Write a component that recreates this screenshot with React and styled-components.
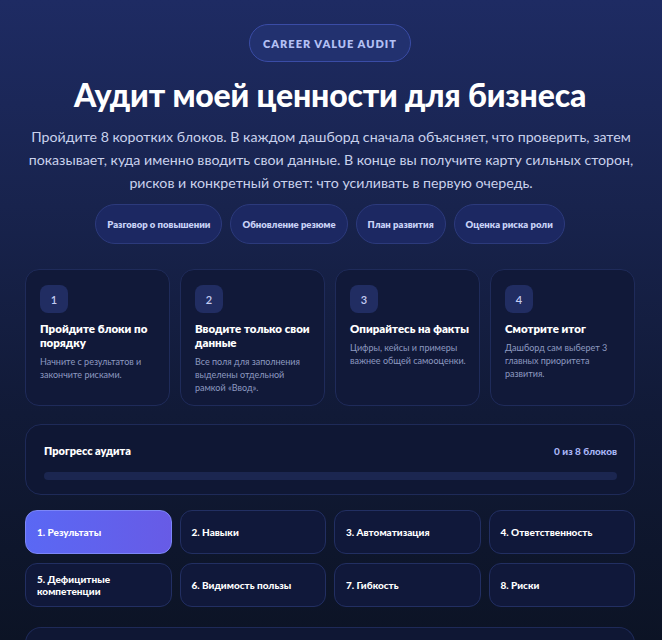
import styled, { createGlobalStyle } from "styled-components";

const GlobalStyle = createGlobalStyle`
  html, body {
    margin: 0;
    padding: 0;
  }
  body {
    font-family: Lato, "Noto Sans", sans-serif;
    background: linear-gradient(180deg, #1e2b63 0%, #18234d 30%, #111a37 60%, #0b1221 100%);
    min-height: 100vh;
    color: #fff;
  }
`;

const Page = styled.div`
  padding: 24px 27px 0 25px;
  display: flex;
  flex-direction: column;
`;

const Hero = styled.header`
  display: flex;
  flex-direction: column;
  align-items: center;
  text-align: center;
`;

const Badge = styled.div`
  display: flex;
  align-items: center;
  height: 36px;
  padding: 0 13px;
  border-radius: 999px;
  background: #22316f;
  border: 1px solid #3a4ca6;
  color: #b3c0f4;
  font-size: 11px;
  font-weight: 800;
  letter-spacing: 1px;
`;

const Title = styled.h1`
  margin: 15px 0 0;
  font-size: 32px;
  line-height: 36px;
  font-weight: 900;
  color: #fff;
  letter-spacing: -0.2px;
`;

const Lead = styled.p`
  margin: 12px -2px 0 0;
  font-size: 14.2px;
  line-height: 23px;
  color: #c9d1ec;
`;

const Chips = styled.div`
  display: flex;
  gap: 8px;
  margin-top: 10px;
`;

const Chip = styled.div`
  display: flex;
  align-items: center;
  height: 38px;
  padding: 0 11px;
  border-radius: 999px;
  background: #1c2862;
  border: 1px solid #2c3a7c;
  color: #c8d2f6;
  font-size: 9.5px;
  font-weight: 800;
`;

const Steps = styled.div`
  display: grid;
  grid-template-columns: repeat(4, 1fr);
  gap: 10px;
  margin-top: 25px;
`;

const StepCard = styled.div`
  height: 137px;
  box-sizing: border-box;
  padding: 15px 8px 15px 14px;
  border-radius: 14px;
  background: #111939;
  border: 1px solid #1f2b5a;
`;

const StepNum = styled.div`
  width: 28px;
  height: 28px;
  border-radius: 8px;
  background: #212d62;
  color: #c4ccf2;
  font-size: 11px;
  font-weight: 600;
  display: flex;
  align-items: center;
  justify-content: center;
`;

const StepTitle = styled.div`
  margin-top: 9px;
  font-size: 11.5px;
  line-height: 14px;
  font-weight: 800;
  color: #fff;
`;

const StepText = styled.div`
  margin-top: 5px;
  padding-right: 5px;
  font-size: 9px;
  line-height: 13px;
  color: #8e9ac0;
`;

const ProgressCard = styled.section`
  margin-top: 18px;
  padding: 19px 17px 14px 18px;
  border-radius: 16px;
  background: #0f1734;
  border: 1px solid #1e2a58;
`;

const ProgressHead = styled.div`
  display: flex;
  justify-content: space-between;
  align-items: center;
`;

const ProgressLabel = styled.div`
  font-size: 11px;
  font-weight: 800;
  color: #fff;
`;

const ProgressCount = styled.div`
  font-size: 10px;
  font-weight: 900;
  color: #a8b5f6;
`;

const Track = styled.div`
  margin-top: 15px;
  height: 8px;
  border-radius: 4px;
  background: #1b2650;
  overflow: hidden;
`;

const Fill = styled.div`
  height: 100%;
  background: linear-gradient(90deg, #5865f2, #7a5cf0);
`;

const Tabs = styled.div`
  display: grid;
  grid-template-columns: repeat(4, 1fr);
  gap: 9px 8px;
  margin-top: 15px;
`;

const Tab = styled.button`
  height: 44px;
  display: flex;
  align-items: center;
  text-align: left;
  padding: 0 11px;
  border-radius: 12px;
  font-family: inherit;
  font-size: 10px;
  line-height: 12px;
  font-weight: 900;
  color: #fff;
  cursor: pointer;
  background: ${(p) =>
    p.$active ? "linear-gradient(90deg, #5a68f4 0%, #675be6 100%)" : "#10183a"};
  border: 1px solid ${(p) => (p.$active ? "#7c86f7" : "#222f62")};
`;

const NextCard = styled.div`
  margin-top: 20px;
  height: 60px;
  border-radius: 16px 16px 0 0;
  background: #0f1734;
  border: 1px solid #1e2a58;
  border-bottom: none;
`;

const chips = [
  "Разговор о повышении",
  "Обновление резюме",
  "План развития",
  "Оценка риска роли",
];

const steps = [
  {
    title: "Пройдите блоки по порядку",
    text: "Начните с результатов и закончите рисками.",
  },
  {
    title: "Вводите только свои данные",
    text: "Все поля для заполнения выделены отдельной рамкой «Ввод».",
  },
  {
    title: "Опирайтесь на факты",
    text: "Цифры, кейсы и примеры важнее общей самооценки.",
  },
  {
    title: "Смотрите итог",
    text: "Дашборд сам выберет 3 главных приоритета развития.",
  },
];

const blocks = [
  "1. Результаты",
  "2. Навыки",
  "3. Автоматизация",
  "4. Ответственность",
  "5. Дефицитные компетенции",
  "6. Видимость пользы",
  "7. Гибкость",
  "8. Риски",
];

const done = 0;

const App = () => {
  return (
    <>
      <GlobalStyle />
      <Page>
        <Hero>
          <Badge>CAREER VALUE AUDIT</Badge>
          <Title>Аудит моей ценности для бизнеса</Title>
          <Lead>
            Пройдите 8 коротких блоков. В каждом дашборд сначала объясняет, что
            проверить, затем показывает, куда именно вводить свои данные. В конце
            вы получите карту сильных сторон, рисков и конкретный ответ: что
            усиливать в первую очередь.
          </Lead>
          <Chips>
            {chips.map((c) => (
              <Chip key={c}>{c}</Chip>
            ))}
          </Chips>
        </Hero>

        <Steps>
          {steps.map((s, i) => (
            <StepCard key={s.title}>
              <StepNum>{i + 1}</StepNum>
              <StepTitle>{s.title}</StepTitle>
              <StepText>{s.text}</StepText>
            </StepCard>
          ))}
        </Steps>

        <ProgressCard>
          <ProgressHead>
            <ProgressLabel>Прогресс аудита</ProgressLabel>
            <ProgressCount>{done} из 8 блоков</ProgressCount>
          </ProgressHead>
          <Track>
            <Fill style={{ width: `${(done / 8) * 100}%` }} />
          </Track>
        </ProgressCard>

        <Tabs>
          {blocks.map((b, i) => (
            <Tab key={b} $active={i === 0}>
              {b}
            </Tab>
          ))}
        </Tabs>

        <NextCard />
      </Page>
    </>
  );
};

export default App;
